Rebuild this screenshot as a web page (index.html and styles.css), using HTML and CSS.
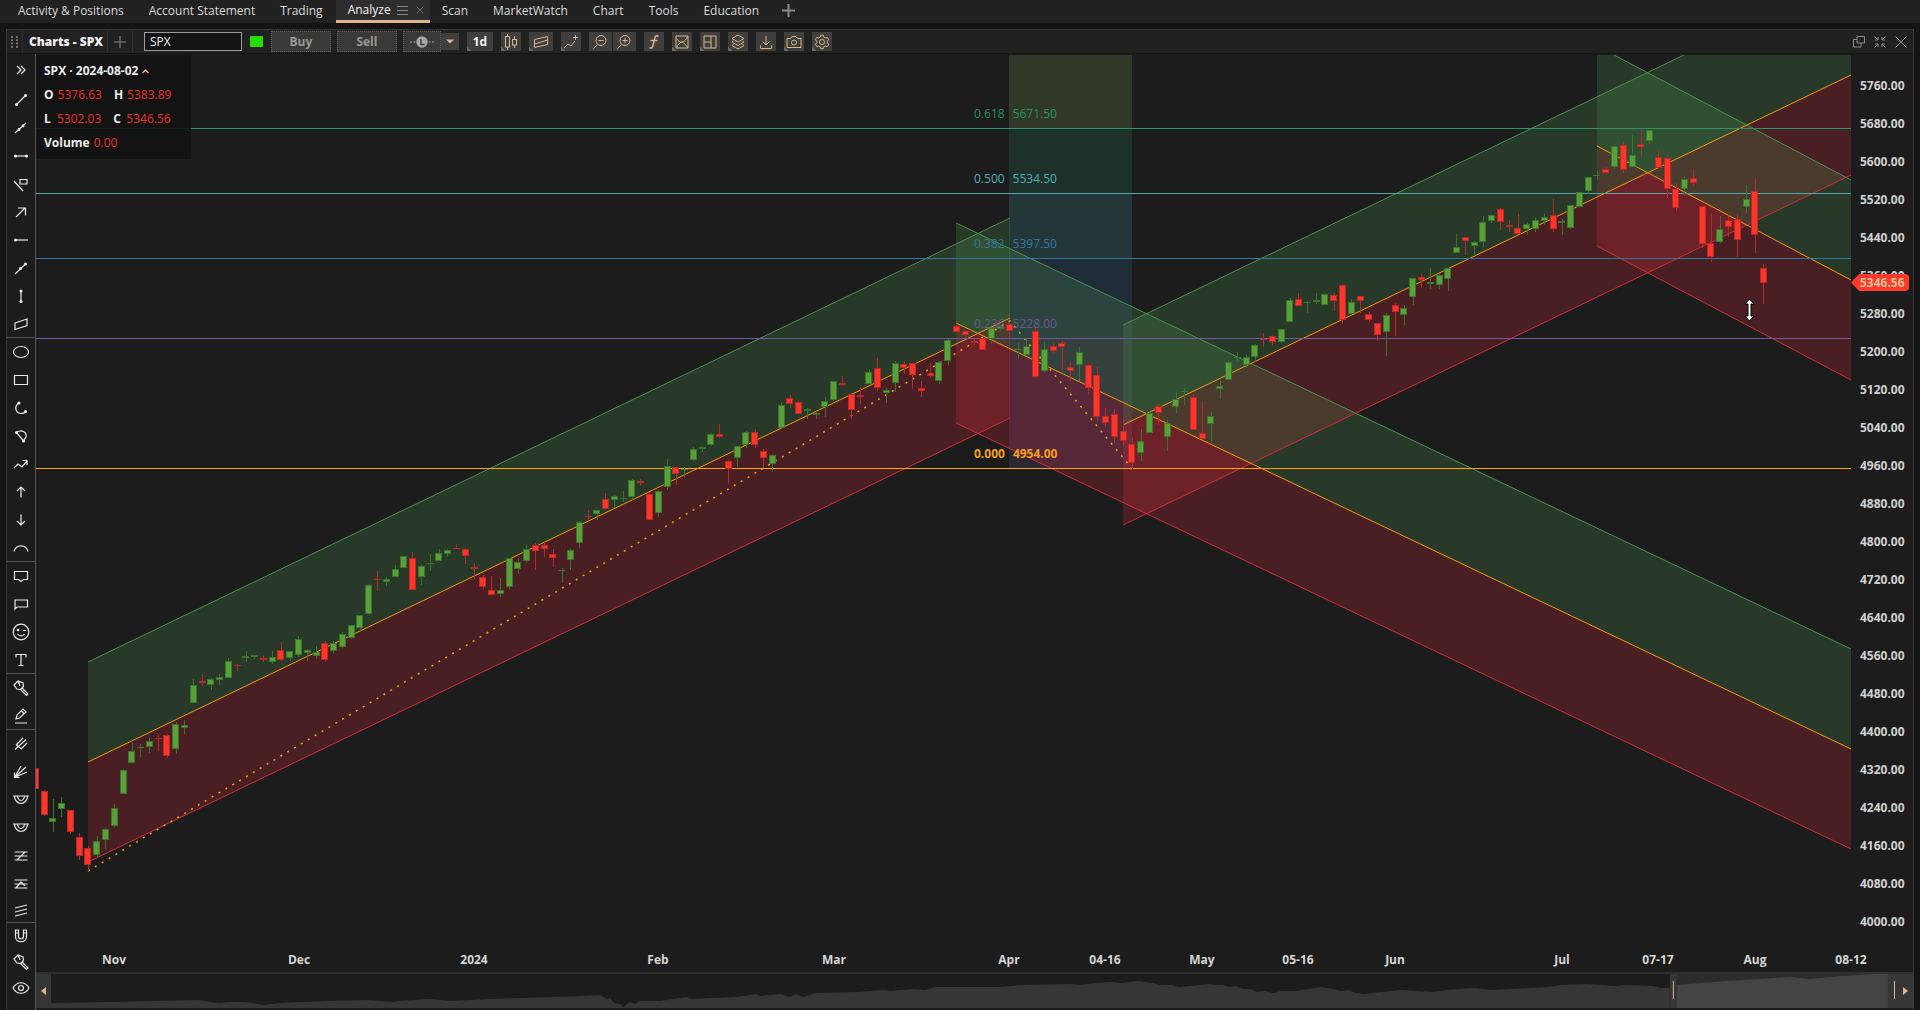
FILE: index.html
```html
<!DOCTYPE html>
<html lang="en">
<head>
<meta charset="utf-8">
<title>Charts - SPX</title>
<link rel="stylesheet" href="styles.css">
</head>
<body>
<div class="app">
  <nav class="menu">
    <a href="#">Activity &amp; Positions</a>
    <a href="#">Account Statement</a>
    <a href="#">Trading</a>
    <div class="menu-current">
      <a href="#">Analyze</a>
      <button class="bare" aria-label="Tab menu"><svg width="11" height="11" viewBox="0 0 11 11"><path d="M0 1.5h11M0 5.5h11M0 9.5h11" stroke="#8a8a8a"/></svg></button>
      <button class="bare" aria-label="Close tab"><svg width="8" height="8" viewBox="0 0 8 8"><path d="M.5.5l7 7M7.500.5l-7 7" stroke="#6c6c6c"/></svg></button>
    </div>
    <a href="#">Scan</a>
    <a href="#">MarketWatch</a>
    <a href="#">Chart</a>
    <a href="#">Tools</a>
    <a href="#">Education</a>
    <button class="bare menu-add" aria-label="Add tab"><svg width="13" height="13" viewBox="0 0 13 13"><path d="M6.500 0v13M0 6.500h13" stroke="#8c8c8c" stroke-width="2"/></svg></button>
  </nav>

  <main class="window">
    <header class="toolbar">
      <span class="grip"><svg width="7" height="12" viewBox="0 0 7 12"><path d="M0 1h2M5 1h2M0 4.300h2M5 4.300h2M0 7.600h2M5 7.600h2M0 11h2M5 11h2" stroke="#858585" stroke-width="1.500"/></svg></span>
      <h1 class="title">Charts - SPX</h1>
      <button class="bare add" aria-label="Add chart"><svg width="12" height="12" viewBox="0 0 12 12"><path d="M6 0v12M0 6h12" stroke="#6a6a6a" stroke-width="1.500"/></svg></button>
      <input class="symbol" type="text" value="SPX" aria-label="Symbol">
      <span class="link-color"></span>
      <div class="orders">
        <button class="trade">Buy</button>
        <button class="trade">Sell</button>
        <div class="split">
          <button class="trade limit" aria-label="Order type"><svg width="24" height="12" viewBox="0 0 24 12"><path d="M0 6h2M3.500 6h2M18.500 6h2M22 6h2" stroke="#a8a8a8"/><circle cx="12" cy="6" r="5.700" fill="#a8a8a8"/><path d="M11 3v5.500h3.500" stroke="#3d3c3a" stroke-width="1.500" fill="none"/></svg></button>
          <button class="tool caret" aria-label="Order options"><svg width="8" height="5" viewBox="0 0 8 5"><path d="M0 .5h8L4 4.500z" fill="#dcb58c"/></svg></button>
        </div>
      </div>
      <button class="tool range menu-mark">1d</button>
      <button class="tool menu-mark" aria-label="Chart type"><svg width="14" height="16" viewBox="0 0 14 16"><path d="M3.500 0v2.500M3.500 13v3M10.500 2v3.500M10.500 11v3"/><rect x="1.500" y="2.500" width="4" height="10.500"/><rect x="8.500" y="5.500" width="4" height="5.500"/></svg></button>
      <button class="tool wide menu-mark" aria-label="Drawings"><svg width="16" height="14" viewBox="0 0 16 14"><path d="M1.500 4.500l13-3v8l-13 3zM1.500 9l13-4"/></svg></button>
      <button class="tool menu-mark" aria-label="Patterns"><svg width="16" height="16" viewBox="0 0 16 16"><path d="M1 14l4-4 3 2 4-5M12.500 1v5M10 3.500h5"/></svg></button>
      <div class="zooms">
        <button class="tool zoom" aria-label="Zoom out"><svg width="16" height="16" viewBox="0 0 16 16"><circle cx="9" cy="6.500" r="5"/><path d="M5.500 10.500L1.500 14.500M6.500 6.500h5"/></svg></button>
        <button class="tool zoom" aria-label="Zoom in"><svg width="16" height="16" viewBox="0 0 16 16"><circle cx="9" cy="6.500" r="5"/><path d="M5.500 10.500L1.500 14.500M6.500 6.500h5M9 4v5"/></svg></button>
      </div>
      <button class="tool" aria-label="Studies"><svg width="14" height="16" viewBox="0 0 14 16"><path d="M11.500 2.500C9.500 1 8.300 2 7.700 4.500L6 11.500C5.500 13.800 4 14.800 2.500 13.500M3.500 6.500h7" stroke-width="1.500"/></svg></button>
      <button class="tool menu-mark" aria-label="Drawing sets"><svg width="14" height="14" viewBox="0 0 14 14"><path d="M1 1h12v12H1zM1.500 3.500c2 3 3.500 4 5.500 3.500 2.500-.5 4.500-2.500 5.500-5.500M1.500 12.500c1.500-3 3-5 5.500-5.500 2 1 4 3 5.500 5.500"/></svg></button>
      <button class="tool menu-mark" aria-label="Grid"><svg width="14" height="14" viewBox="0 0 14 14"><path d="M1 1h12v12H1zM8 1v12M1 7h7"/></svg></button>
      <button class="tool menu-mark" aria-label="Layers"><svg width="16" height="16" viewBox="0 0 16 16"><path d="M8 1l6 3.500L8 8 2 4.500zM3.500 7L2 8l6 3.500L14 8l-1.500-1M3.500 10.500L2 11.500 8 15l6-3.500-1.500-1"/></svg></button>
      <button class="tool" aria-label="Download"><svg width="14" height="14" viewBox="0 0 14 14"><path d="M7 1v9M3.500 6.500L7 10l3.500-3.500M1.500 10.500v3h11v-3"/></svg></button>
      <button class="tool menu-mark" aria-label="Snapshot"><svg width="16" height="14" viewBox="0 0 16 14"><path d="M1 3.500h3.500l1.500-2h4l1.500 2H15v9H1z"/><circle cx="8" cy="7.500" r="2.500"/></svg></button>
      <button class="tool menu-mark" aria-label="Settings"><svg width="16" height="16" viewBox="0 0 16 16"><path d="M6.700 1.200h2.600l.5 2 1.500.8 2-.6 1.400 2.300-1.400 1.500v1.600l1.400 1.500-1.400 2.300-2-.6-1.500.8-.5 2H6.700l-.5-2-1.500-.8-2 .6-1.400-2.300 1.400-1.500V7.200L1.300 5.700l1.400-2.300 2 .6 1.500-.8z"/><circle cx="8" cy="8" r="2.500"/></svg></button>
      <div class="window-controls">
        <button class="bare" aria-label="Detach"><svg width="12" height="12" viewBox="0 0 12 12"><path d="M4 .5h7.500V7H4zM4 3.500H.5V11H8V7"/></svg></button>
        <button class="bare" aria-label="Restore"><svg width="12" height="12" viewBox="0 0 12 12"><path d="M.5.5L4 4M4 1v3H1M11.500.5L8 4M8 1v3h3M.5 11.500L4 8M1 8h3v3M11.500 11.500L8 8M11 8H8v3"/></svg></button>
        <button class="bare" aria-label="Close"><svg width="12" height="12" viewBox="0 0 12 12"><path d="M.5.5l11 11M11.500.5l-11 11"/></svg></button>
      </div>
    </header>

    <div class="workspace">
      <aside class="palette">
        <div class="group lead">
          <button aria-label="Expand"><svg viewBox="0 0 18 18"><path d="M5 5l4 4-4 4M9 5l4 4-4 4"/></svg></button>
        </div>
        <div class="group">
          <button aria-label="Trendline"><svg viewBox="0 0 18 18"><path d="M5 13l9-9"/><circle class="dot" cx="4.500" cy="13.500" r="1.500"/><circle class="dot" cx="13.500" cy="4.500" r="1.500"/></svg></button>
          <button aria-label="Extended line"><svg viewBox="0 0 18 18"><path d="M3 14L14 4"/><circle class="dot" cx="7" cy="10.500" r="1.400"/><circle class="dot" cx="11" cy="7" r="1.400"/></svg></button>
          <button aria-label="Segment"><svg viewBox="0 0 18 18"><path d="M3 9h12"/><circle class="dot" cx="3.500" cy="9" r="1.500"/><circle class="dot" cx="14.500" cy="9" r="1.500"/></svg></button>
          <button aria-label="Price level label"><svg viewBox="0 0 18 18"><path d="M2 6l9 10M8 4.500h7V9H8z"/></svg></button>
          <button aria-label="Arrow line"><svg viewBox="0 0 18 18"><path d="M4 14l9-9M6 5h7.500v7.500"/></svg></button>
          <button aria-label="Ray"><svg viewBox="0 0 18 18"><path d="M3 9h13"/><circle class="dot" cx="3.500" cy="9" r="1.500"/></svg></button>
          <button aria-label="Three point line"><svg viewBox="0 0 18 18"><path d="M3 15L14 4.500"/><circle class="dot" cx="8.500" cy="9.500" r="1.500"/><circle class="dot" cx="13.500" cy="5" r="1.500"/></svg></button>
          <button aria-label="Vertical segment"><svg viewBox="0 0 18 18"><path d="M9 3v12"/><circle class="dot" cx="9" cy="4" r="1.500"/><circle class="dot" cx="9" cy="14.500" r="1.500"/></svg></button>
          <button aria-label="Channel"><svg viewBox="0 0 18 18"><path d="M3 8l12-4v6.500L3 14.500z"/></svg></button>
        </div>
        <div class="group">
          <button aria-label="Ellipse"><svg viewBox="0 0 18 18"><ellipse cx="9" cy="9" rx="7.500" ry="5.500"/></svg></button>
          <button aria-label="Rectangle"><svg viewBox="0 0 18 18"><path d="M2.500 4.500h13v9h-13z"/></svg></button>
          <button aria-label="Arc"><svg viewBox="0 0 18 18"><path d="M7 4c-5 3-4 10 2 10.500 2.500 0 4-1 5-2"/><circle class="dot" cx="7" cy="4" r="1.500"/><circle class="dot" cx="13.500" cy="12.500" r="1.500"/></svg></button>
          <button aria-label="Sector"><svg viewBox="0 0 18 18"><path d="M4.500 5.500C9 2 15 5 14 10l-2.500 4z"/><circle class="dot" cx="4.500" cy="5.500" r="1.500"/><circle class="dot" cx="11.500" cy="14" r="1.500"/></svg></button>
          <button aria-label="Path"><svg viewBox="0 0 18 18"><path d="M2 13l4-4 4 3 5-6M10.500 5.500H15V10"/></svg></button>
          <button aria-label="Up arrow"><svg viewBox="0 0 18 18"><path d="M9 14.500V4M5 8l4-4 4 4"/></svg></button>
          <button aria-label="Down arrow"><svg viewBox="0 0 18 18"><path d="M9 3.500V14M5 10l4 4 4-4"/></svg></button>
          <button aria-label="Curve"><svg viewBox="0 0 18 18"><path d="M2 12.500c2-7.500 12-7.500 14 0"/></svg></button>
        </div>
        <div class="group">
          <button aria-label="Callout"><svg viewBox="0 0 18 18"><path d="M2.500 4.500h13v8h-4L9 14.500l-2.500-2h-4z"/></svg></button>
          <button aria-label="Note"><svg viewBox="0 0 18 18"><path d="M3 14V5h12.500v7H5z"/></svg></button>
          <button aria-label="Emoji"><svg viewBox="0 0 18 18"><circle cx="9" cy="9" r="7.800"/><path d="M5.500 11c2 2.500 5 2.500 7 0M11 7.500h3"/><circle class="dot" cx="6" cy="7" r="1.300"/></svg></button>
          <button aria-label="Text"><svg viewBox="0 0 18 18"><path d="M4 6.500V3.500h10v3M9 3.500v11M6.500 14.500h5"/></svg></button>
        </div>
        <div class="group">
          <button aria-label="Fill"><svg viewBox="0 0 18 18"><path d="M2 6l4-4 5 2 .5 3.500-3 3L5 10zM10 9l6 6-1.500 1.500L9 11M6 2l2 5"/></svg></button>
          <button aria-label="Pencil"><svg viewBox="0 0 18 18"><path d="M4 12l1-4 6-6 3 3-6.500 6zM3 16h12M9.500 4l3 3"/></svg></button>
        </div>
        <div class="group fib">
          <button aria-label="Pitchfork"><svg viewBox="0 0 18 18"><path d="M3 14.500l11-10M4 10l7-7M9 14l6-6M4 9.500L9.500 14"/></svg></button>
          <button aria-label="Fan"><svg viewBox="0 0 18 18"><path d="M2.500 14.500L9 3M2.500 14.500L14 4M2.500 14.500L15 9M2.500 9.500v5h5"/></svg></button>
          <button aria-label="Fibonacci arcs"><svg viewBox="0 0 18 18"><path d="M1 5h16M2.500 5c0 4 3 7.500 6.500 7.500S15.500 9 15.500 5M5.500 5c0 2 1.500 4.500 3.500 4.500S12.500 7 12.500 5"/></svg></button>
          <button aria-label="Speed arcs"><svg viewBox="0 0 18 18"><path d="M1 5h16M2.500 5c0 4 3 7.500 6.500 7.500S15.500 9 15.500 5M5.500 5c0 2 1.500 4.500 3.500 4.500S12.500 7 12.500 5"/></svg></button>
          <button aria-label="Retracement"><svg viewBox="0 0 18 18"><path d="M2.500 5h13M2.500 9h13M2.500 13h13M5 13l8-8"/></svg></button>
          <button aria-label="Extension"><svg viewBox="0 0 18 18"><path d="M2.500 5h13M2.500 9h13M2.500 13h13M4 13l5-6 4 4"/></svg></button>
          <button aria-label="Parallel lines"><svg viewBox="0 0 18 18"><path d="M3 7l12-3M3 11l12-3M3 15l12-3"/></svg></button>
        </div>
        <div class="group compact">
          <button aria-label="Magnet"><svg viewBox="0 0 18 18"><path d="M3.500 3h3v6.500c0 3 5 3 5 0V3h3v6.500c0 7-11 7-11 0zM3.500 6h3M11.500 6h3"/></svg></button>
          <button aria-label="Style"><svg viewBox="0 0 18 18"><path d="M2 6l4-4 5 2 .5 3.500-3 3L5 10zM10 9l6 6-1.500 1.500L9 11M6 2l2 5"/></svg></button>
          <button aria-label="Visibility"><svg viewBox="0 0 18 18"><path d="M1 9c4-7 12-7 16 0-4 7-12 7-16 0z"/><circle cx="9" cy="9" r="2.500"/></svg></button>
          <button aria-label="Delete"><svg viewBox="0 0 18 18"><path d="M3 5.500h12V17H3z"/></svg></button>
        </div>
      </aside>

      <section class="chart">
        <div class="chart-main">
          <div class="plot" id="plot">
            <svg class="canvas" viewBox="36 54 1815 886" preserveAspectRatio="none">
              <g class="zone">
                <path fill="#80ad53" d="M1009 55h123v73h-123z"/>
                <path fill="#21825d" d="M1009 128h123v65h-123z"/>
                <path fill="#44a3a8" d="M1009 193h123v65h-123z"/>
                <path fill="#326ea8" d="M1009 258h123v80h-123z"/>
                <path fill="#7757a1" d="M1009 338h123v130h-123z"/>
              </g>
              <g class="down-fill">
                <path d="M88 762L1010 318V418L88 862z"/>
                <path d="M956 323L1851 749V849L956 423z"/>
                <path d="M1123 425L1851 75V175L1123 525z"/>
                <path d="M1597 146L1851 280V380L1597 246z"/>
              </g>
              <g class="up-fill">
                <path d="M88 662L1010 218V318L88 762z"/>
                <path d="M956 223L1851 649V749L956 323z"/>
                <path d="M1123 325L1684 55H1851V75L1123 425z"/>
                <path d="M1597 55H1614L1851 180V280L1597 146z"/>
              </g>
              <path class="ray up-line" d="M88 662L1010 218M956 223L1851 649M1123 325L1684 55M1614 55L1851 180"/>
              <path class="ray down-line" d="M88 862L1010 418M956 423L1851 849M1123 525L1851 175M1597 246L1851 380"/>
              <path class="ray mid-line" d="M88 762L1010 318M956 323L1851 749M1123 425L1851 75M1597 146L1851 280"/>
              <path class="ray swing" d="M88 871L1010 321L1130 466"/>
              <g class="levels">
                <path stroke="#2a9666" d="M36 128.500H1851"/>
                <path stroke="#52aaa8" d="M36 193.500H1851"/>
                <path stroke="#2f78a4" d="M36 258.500H1851"/>
                <path stroke="#7457a0" d="M36 338.500H1851"/>
                <path stroke="#ffa500" d="M36 468.500H1851"/>
              </g>
              <g id="candles" class="candles"></g>
              <path class="cursor" d="M1749.500 299l4.500 5h-3v12h3l-4.500 5-4.500-5h3v-12h-3z"/>
            </svg>
            <div class="quote">
              <div><b>SPX · 2024-08-02</b><svg width="7" height="5" viewBox="0 0 7 5"><path d="M.5 4l3-3 3 3" fill="none" stroke="#dcb58c" stroke-width="1.500"/></svg></div>
              <div><b>O</b><span>5376.63</span><b class="second">H</b><span>5383.89</span></div>
              <div><b>L</b><span>5302.03</span><b class="second">C</b><span>5346.56</span></div>
              <div><b>Volume</b><span>0.00</span></div>
            </div>
          </div>
          <div class="price-axis" id="prices"><output class="last-price">5346.56</output></div>
        </div>
        <div class="time-axis" id="dates"></div>
        <div class="navigator">
          <button class="step" aria-label="Scroll left"><svg width="5" height="8" viewBox="0 0 5 8"><path d="M5 0v8L0 4z"/></svg></button>
          <svg class="overview" viewBox="51 974 1846 34" preserveAspectRatio="none">
            <path fill="#363636" d="M51 1003L110 1002L199 1000L210 1002L220 1003L228 1002L245 1002L252 1003L264 1005L280 1003L300 1002L330 1001L367 1000L380 1001L392 1002L400 1001L429 999L450 1001L490 999L551 997L580 996L600 995L606 999L610 998L614 1003L620 1004L623 1007L630 1002L634 1004L640 1001L660 1001L686 997L690 999L735 997L756 994L760 996L780 994L790 997L795 994L803 997L815 993L857 992L882 990L890 991L912 989L925 990L935 987L960 987L1000 987L1021 985L1070 984L1080 985L1095 983L1110 982L1120 983L1138 981L1152 983L1160 985L1171 985L1178 987L1190 986L1208 984L1215 985L1222 985L1229 987L1235 986L1242 989L1250 989L1256 992L1264 991L1273 993L1280 991L1295 991L1321 987L1332 989L1340 991L1348 990L1355 993L1364 994L1380 992L1401 990L1431 992L1445 990L1474 988L1490 990L1511 989L1548 987L1560 985L1585 984L1615 986L1625 985L1652 986L1660 988L1669 988V1008H51z"/>
            <path fill="#2c2c2c" d="M1669 974H1897V1008H1669z"/>
            <path fill="#444442" d="M1676 985L1700 983L1725 981L1774 978L1790 977L1808 979L1820 978L1842 976L1872 974H1887V1008H1676z"/>
            <path fill="#363636" d="M1669 974h7v34h-7zM1887 974h10v34h-10z"/>
            <path fill="#dcb58c" d="M1672 981h1v18h-1zM1893 981h1v18h-1z"/>
          </svg>
          <button class="step" aria-label="Scroll right"><svg width="5" height="8" viewBox="0 0 5 8"><path d="M0 0v8l5-4z"/></svg></button>
        </div>
      </section>
    </div>
  </main>
</div>
<script src="chart.js"></script>
</body>
</html>
```
FILE: styles.css
```css
* { box-sizing: border-box; }

body {
  margin: 0;
  background: #141414;
  color: #e4e4e4;
  font: 12px/16px "Open Sans", "Noto Sans", sans-serif;
}

button, input { font: inherit; color: inherit; }
button { padding: 0; border: 0; background: none; display: flex; align-items: center; justify-content: center; flex: none; }
svg { display: block; flex: none; }

.app { display: flex; flex-direction: column; height: 100vh; overflow: hidden; }

/* Main menu */
.menu { display: flex; flex: none; height: 23px; margin-bottom: 6px; padding-left: 6px; background: #212121; }
.menu a { padding: 3px 13px 0 12px; color: #dadada; text-decoration: none; }
.menu .menu-current { display: flex; align-items: center; gap: 8px; padding-right: 6px; background: #2d2d2d; border-bottom: 3px solid #dcb58c; }
.menu .menu-current a { padding: 0 0 0 12px; margin-right: -2px; color: #f4f4f4; }
.menu-add { margin: 0 10px; height: 20px; }

/* Chart window */
.window { display: flex; flex-direction: column; flex: 1; min-height: 0; margin: 0 6px; border: 1px solid #383838; border-bottom: 0; background: #1c1c1c; }

.toolbar { display: flex; align-items: center; gap: 8px; flex: none; height: 24px; background: #212121; border-bottom: 1px solid #141414; }
.grip { display: flex; align-items: center; justify-content: center; width: 16px; height: 23px; border-right: 1px solid #2c2c2c; }
.title { margin: 0 -4px 0 -2px; font-size: 12px; line-height: 16px; font-weight: 800; color: #f0f0f0; }
.add { width: 26px; height: 23px; border: solid #303030; border-width: 0 1px; }
.symbol { width: 98px; height: 19px; margin-left: 3px; padding: 0 5px; background: #141414; border: 1px solid #9a9a9a; color: #f0f0f0; }
.link-color { width: 13px; height: 11px; background: #26dd00; }
.orders { display: flex; gap: 6px; }
.trade { width: 60px; height: 21px; background: #3a3937; border: 1px dotted #5e5e5e; color: #989898; font-weight: 700; }
.split { display: flex; align-items: center; }
.zooms { display: flex; gap: 1px; }
.trade.limit { width: 38px; }
.tool { width: 20px; height: 19px; background: #3f3f3d; }
.tool svg { fill: none; stroke: #dcb58c; }
.tool.caret { width: 18px; height: 17px; }
.tool.caret svg { stroke: none; }
.tool.range { width: 26px; font-weight: 700; color: #f2f2f2; }
.tool.wide { width: 24px; }
.tool.zoom { width: 23px; }
.menu-mark { background: linear-gradient(45deg, #6a6a6a 3px, #3f3f3d 3px); }
.window-controls { display: flex; gap: 9px; margin: 0 6px 0 auto; }
.window-controls svg { fill: none; stroke: #8c8c8c; }

.workspace { display: flex; flex: 1; min-height: 0; }

/* Drawing tools */
.palette { flex: none; width: 29px; overflow: hidden; border-right: 1px solid #565656; }
.group { border-bottom: 1px solid #565656; }
.group button { width: 28px; height: 28px; }
.group button:last-child { height: 27px; }
.group svg { width: 18px; height: 18px; fill: none; stroke: #e8e8e8; stroke-width: 1.2; }
.group .dot { fill: #f0f0f0; stroke: none; }
.group.lead { border: 0; padding: 2px 0 3px; }
.group.fib button:last-child { height: 24px; }
.group.compact button { height: 26px; }

/* Chart */
.chart { display: flex; flex-direction: column; flex: 1; min-width: 0; }
.chart-main { display: flex; flex: 1; min-height: 0; }
.plot { position: relative; flex: 1; min-width: 0; }
.canvas { width: 100%; height: 100%; }
.zone { fill-opacity: .2; }
.up-fill { fill: #4e9654; fill-opacity: .24; }
.down-fill { fill: #ed2e40; fill-opacity: .22; }
.ray { fill: none; stroke-width: 1; }
.up-line { stroke: #4a9150; }
.mid-line { stroke: #f39a12; }
.down-line { stroke: #cc2e3a; }
.ray.swing { stroke: #f0a51c; stroke-dasharray: 2 6; stroke-width: 1.5; }
.levels { fill: none; }
.candles { shape-rendering: crispEdges; }
.edge-up { fill: #3b752c; }
.edge-down { fill: #b82a28; }
.body-up { fill: #59a03b; }
.body-down { fill: #ff3529; }
.cursor { fill: #ffffff; stroke: #000000; stroke-width: 1; }

.quote { position: absolute; left: 0; top: 1px; width: 155px; height: 104px; padding: 4px 8px; background: rgba(18, 18, 18, .85); line-height: 24px; }
.quote div { display: flex; align-items: center; gap: 4px; }
.quote b { min-width: 9px; font-weight: 700; color: #ececec; }
.quote .second { margin-left: 8px; }
.quote span { color: #ee312b; }

.fib-label { position: absolute; display: flex; gap: 8px; width: 88px; margin: -22px 0 0 -36px; white-space: nowrap; font-weight: 500; }
.fib-label.base { font-weight: 700; }

.price-axis { position: relative; flex: none; width: 62px; padding: 13px 0 0 9px; font-weight: 700; color: #d0d0d0; }
.price-axis div { height: 38px; line-height: 38px; }
.last-price { position: absolute; left: 0; top: 220px; width: 58px; padding-left: 9px; line-height: 17px; background: #ff392b; color: #dcc096; font-weight: 700; border-radius: 0 4px 4px 0; clip-path: polygon(0 50%, 8px 0, 100% 0, 100% 100%, 8px 100%); }

.time-axis { position: relative; flex: none; height: 32px; margin-right: 62px; font-weight: 700; color: #d6d6d6; }
.time-axis span { position: absolute; top: 12px; transform: translateX(-50%); white-space: nowrap; }

.navigator { display: flex; flex: none; height: 38px; border-top: 2px solid #303030; border-bottom: 2px solid #1a1a1a; }
.overview { flex: 1; height: 34px; min-width: 0; }
.step { width: 15px; height: 34px; background: #363636; }
.step svg { fill: #dcb58c; }
```
FILE: chart.js
```js
// Plot coordinates: x runs 36..1851, y runs 54..940.
const PLOT = { x: 36, y: 54, width: 1815, height: 886 };

// One candle per session: direction, high, body top, body bottom, low.
const CANDLES = `
R759,768,789,793 R790,791,815,816 G799,818,822,832 G797,803,809,817 R810,810,832,834 R833,837,856,860
R846,848,865,871 G836,841,855,857 G828,829,840,849 G804,808,826,827 G769,770,794,794 G743,751,763,763
G744,747,748,757 G738,741,747,753 R735,738,739,751 R734,735,756,758 G722,724,749,754 G720,725,728,734
G679,685,703,703 R674,681,683,686 G678,679,685,690 G674,677,680,685 G658,661,678,678 R664,665,666,671
G651,656,658,662 G655,655,657,659 R655,658,660,662 G651,657,662,664 R642,650,660,661 G651,651,658,661
G636,639,655,657 G649,650,653,661 G646,652,656,659 R641,643,660,662 G641,643,651,653 G632,634,647,648
G625,625,638,639 G615,615,628,632 G584,585,614,615 R571,579,580,591 G577,579,582,586 G565,569,577,577
G556,556,568,568 R552,558,590,590 G565,566,577,585 G554,563,564,571 G549,553,561,561 G549,550,554,557
R544,548,549,549 R548,549,556,564 R563,567,569,579 R575,577,587,589 R576,590,595,595 G578,590,594,597
G558,558,587,589 G558,562,569,574 G545,549,561,562 R543,545,551,570 R542,545,549,557 R549,554,558,567
G568,570,571,583 G549,550,560,570 G521,522,543,548 R510,516,517,520 G510,510,514,520 R493,499,509,509
G495,496,500,508 G491,498,499,502 G479,480,497,500 R479,481,483,486 R492,494,520,520 G491,491,513,517
G459,466,487,490 R467,467,474,485 G467,469,470,477 G447,449,460,461 G446,447,449,452 G433,434,445,446
R424,434,437,438 R460,461,469,484 G446,446,458,467 G431,432,445,448 R429,432,445,448 R449,451,458,468
G454,455,464,472 G403,405,428,428 R395,398,404,408 R401,402,414,414 G408,409,411,419 G410,413,415,419
G397,401,407,417 G381,381,400,401 R376,383,385,386 R394,394,410,419 R387,395,397,404 G369,372,384,384
R358,368,388,391 G388,390,393,403 G361,363,383,392 R362,364,368,374 R363,363,375,389 R381,388,391,397
R363,373,376,378 G361,362,381,384 G339,340,361,365 R322,326,332,332 R331,331,335,337 R339,341,343,345
R338,338,350,350 G328,328,339,344 G325,326,329,331 R323,324,331,338 G343,349,350,359 G338,346,355,355
R326,331,377,378 G342,349,371,372 R343,346,351,353 R341,343,347,370 R362,367,371,382 G347,352,365,381
R364,365,388,395 R367,375,417,421 R408,416,423,427 R409,414,437,443 R419,431,441,445 R437,444,463,469
G429,441,453,461 G411,413,433,433 R404,406,413,425 G419,423,437,451 G392,399,407,413 G388,391,392,405
R395,397,430,430 R401,433,439,439 G412,416,424,442 G381,386,389,399 G361,362,380,380 G352,357,358,361
G355,357,365,368 G344,345,357,362 R333,339,340,347 R335,336,342,346 G329,329,342,343 G298,300,322,322
R293,299,306,306 G301,302,303,313 G293,300,302,304 G293,294,305,305 R293,295,301,311 R284,285,320,324
G299,302,314,314 R296,296,301,313 R312,314,320,322 R323,323,335,341 G313,315,332,356 R303,305,312,336
G305,308,315,325 G278,278,297,305 R274,277,280,288 G268,282,284,289 G273,275,285,289 G268,268,279,291
G234,247,253,253 R237,237,241,255 G241,242,246,256 G216,222,242,247 G214,215,221,223 R208,209,222,230
R220,225,227,232 R214,228,234,234 G222,224,229,235 G218,220,229,232 G214,217,221,225 R199,215,229,232
G219,221,223,235 G205,205,228,229 G192,192,207,207 G177,177,191,194 G171,175,176,180 R167,169,173,173
G145,146,167,169 R142,145,170,173 G135,155,167,167 R130,144,147,156 G130,130,141,144 R151,157,168,169
R155,158,189,198 R183,189,208,211 G176,179,189,195 R169,178,183,186 R206,206,244,248 R213,243,257,262
G216,229,242,243 R215,220,227,237 R214,219,240,257 G185,199,207,213 R178,191,235,253 R264,268,283,304
`.trim().split(/\s+/);

const FIRST_X = 36.25;
const STEP = 8.773;

function rect(cls, x, y, width, height) {
  return `<rect class="${cls}" x="${x}" y="${y}" width="${width}" height="${height}"/>`;
}

document.getElementById('candles').innerHTML = CANDLES.map((entry, i) => {
  const dir = entry[0] === 'G' ? 'up' : 'down';
  const [high, top, bottom, low] = entry.slice(1).split(',').map(Number);
  const center = FIRST_X + i * STEP;
  const left = Math.floor(center - 3.9);
  const height = Math.max(bottom - top, 1);
  return rect('edge-' + dir, Math.floor(center - 0.6), high, 1, low - high)
    + rect('edge-' + dir, left, top, 7, height)
    + (height > 2 ? rect('body-' + dir, left + 1, top + 1, 5, height - 2) : '');
}).join('');

// Fibonacci level captions, anchored at the left edge of the coloured zone.
const LEVELS = [
  ['0.618', '5671.50', 128, '#2a9062'],
  ['0.500', '5534.50', 193, '#4fb0b4'],
  ['0.382', '5397.50', 258, '#3278a4'],
  ['0.236', '5228.00', 338, '#6b5a94'],
  ['0.000', '4954.00', 468, '#f2a01a'],
];
document.getElementById('plot').insertAdjacentHTML('beforeend', LEVELS.map(([ratio, price, y, color]) => {
  const left = (1010 - PLOT.x) / PLOT.width * 100;
  const top = (y - PLOT.y) / PLOT.height * 100;
  return `<div class="fib-label${ratio === '0.000' ? ' base' : ''}" style="left:${left}%;top:${top}%;color:${color}"><span>${ratio}</span><span>${price}</span></div>`;
}).join(''));

let prices = '';
for (let price = 5760; price >= 4000; price -= 80) prices += `<div>${price}.00</div>`;
document.getElementById('prices').insertAdjacentHTML('afterbegin', prices);

const DATES = [['Nov', 114], ['Dec', 299], ['2024', 474], ['Feb', 658], ['Mar', 834], ['Apr', 1009],
  ['04-16', 1105], ['May', 1202], ['05-16', 1298], ['Jun', 1395], ['Jul', 1562], ['07-17', 1658],
  ['Aug', 1755], ['08-12', 1851]];
document.getElementById('dates').innerHTML = DATES.map(([label, x]) =>
  `<span style="left:${(x - PLOT.x) / PLOT.width * 100}%">${label}</span>`).join('');
```
